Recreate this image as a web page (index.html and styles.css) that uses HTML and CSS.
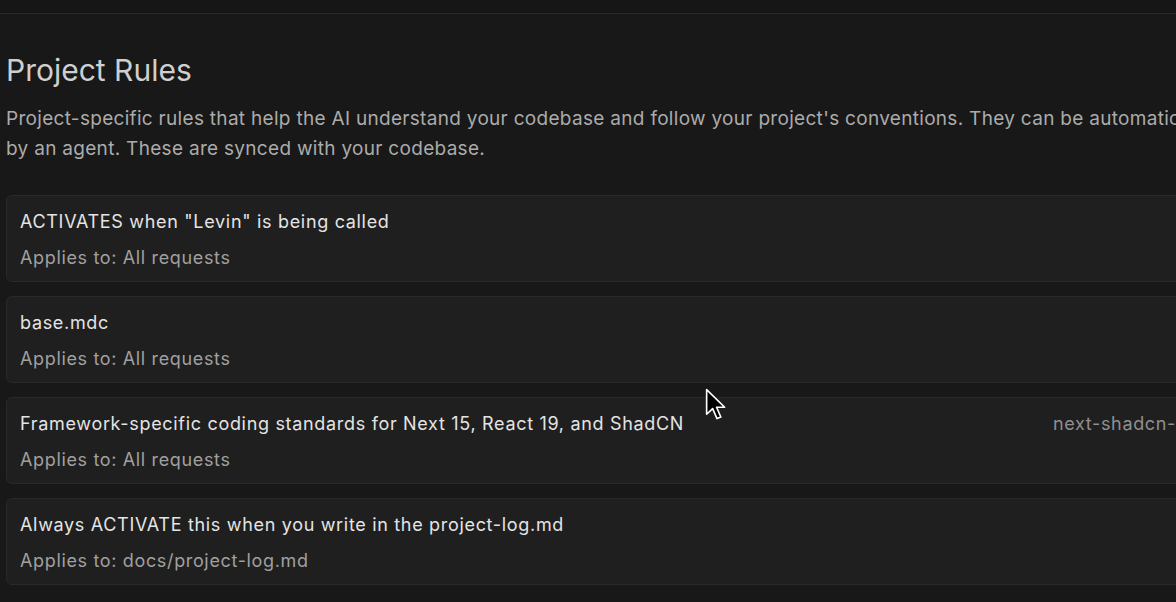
FILE: index.html
```html
<!DOCTYPE html>
<html>
<head>
<meta charset="utf-8">
<link rel="stylesheet" href="styles.css">
</head>
<body>
<div class="topbar"></div>
<main class="content">
  <h1 class="title">Project Rules</h1>
  <p class="desc">Project-specific rules that help the AI understand your codebase and follow your project's conventions. They can be automatically included or fetched by an agent. These are synced with your codebase.</p>
  <div class="rules">
    <div class="rule">
      <div class="rule-head"><span class="rule-name">ACTIVATES when "Levin" is being called</span></div>
      <div class="rule-sub">Applies to: All requests</div>
    </div>
    <div class="rule">
      <div class="rule-head"><span class="rule-name">base.mdc</span></div>
      <div class="rule-sub">Applies to: All requests</div>
    </div>
    <div class="rule">
      <div class="rule-head"><span class="rule-name">Framework-specific coding standards for Next 15, React 19, and ShadCN</span><span class="rule-file">next-shadcn-coding-standards.mdc</span></div>
      <div class="rule-sub">Applies to: All requests</div>
    </div>
    <div class="rule">
      <div class="rule-head"><span class="rule-name">Always ACTIVATE this when you write in the project-log.md</span></div>
      <div class="rule-sub">Applies to: docs/project-log.md</div>
    </div>
  </div>
</main>
<svg class="cursor" width="24" height="35" viewBox="0 0 22 32">
  <path d="M1.5 1.5 L1.5 24 L7 18.8 L11 28 L14.5 26.5 L10.6 17.6 L18 17.6 Z" fill="#000" stroke="#fff" stroke-width="1.5" stroke-linejoin="round"/>
</svg>
</body>
</html>
```
FILE: styles.css
```css
html, body {
  margin: 0;
  padding: 0;
  background: #181818;
  overflow: hidden;
  width: 1176px;
  height: 602px;
}
body {
  font-family: Inter, "Noto Sans", sans-serif;
  position: relative;
}
.topbar {
  height: 13px;
  background: #161616;
  border-bottom: 1px solid #2a2a2a;
}
.content {
  padding: 0 0 0 6px;
  width: 1500px;
}
.title {
  margin: 38px 0 0 0;
  font-size: 30px;
  font-weight: 400;
  line-height: 36px;
  color: #cfcfcf;
}
.desc {
  margin: 16px 0 0 0;
  font-size: 19px;
  letter-spacing: 0.3px;
  line-height: 30px;
  color: #ababab;
  width: 1410px;
}
.rules {
  margin-top: 31px;
  display: flex;
  flex-direction: column;
  gap: 14px;
}
.rule {
  background: #1f1f1f;
  border: 1px solid #292929;
  border-radius: 6px;
  padding: 13px 13px 12px;
  width: 1396px;
  box-sizing: border-box;
  height: 87px;
}
.rule-head {
  display: flex;
  justify-content: space-between;
  align-items: center;
  height: 24px;
}
.rule-name {
  font-size: 18px;
  letter-spacing: 0.68px;
  color: #e4e4e4;
}
.rule-file {
  font-size: 18px;
  letter-spacing: 0.65px;
  color: #8f8f8f;
  margin-right: 6px;
}
.rule-sub {
  margin-top: 13px;
  font-size: 18px;
  letter-spacing: 0.65px;
  line-height: 24px;
  color: #a0a0a0;
}
.cursor {
  position: absolute;
  left: 705px;
  top: 388px;
}
```
